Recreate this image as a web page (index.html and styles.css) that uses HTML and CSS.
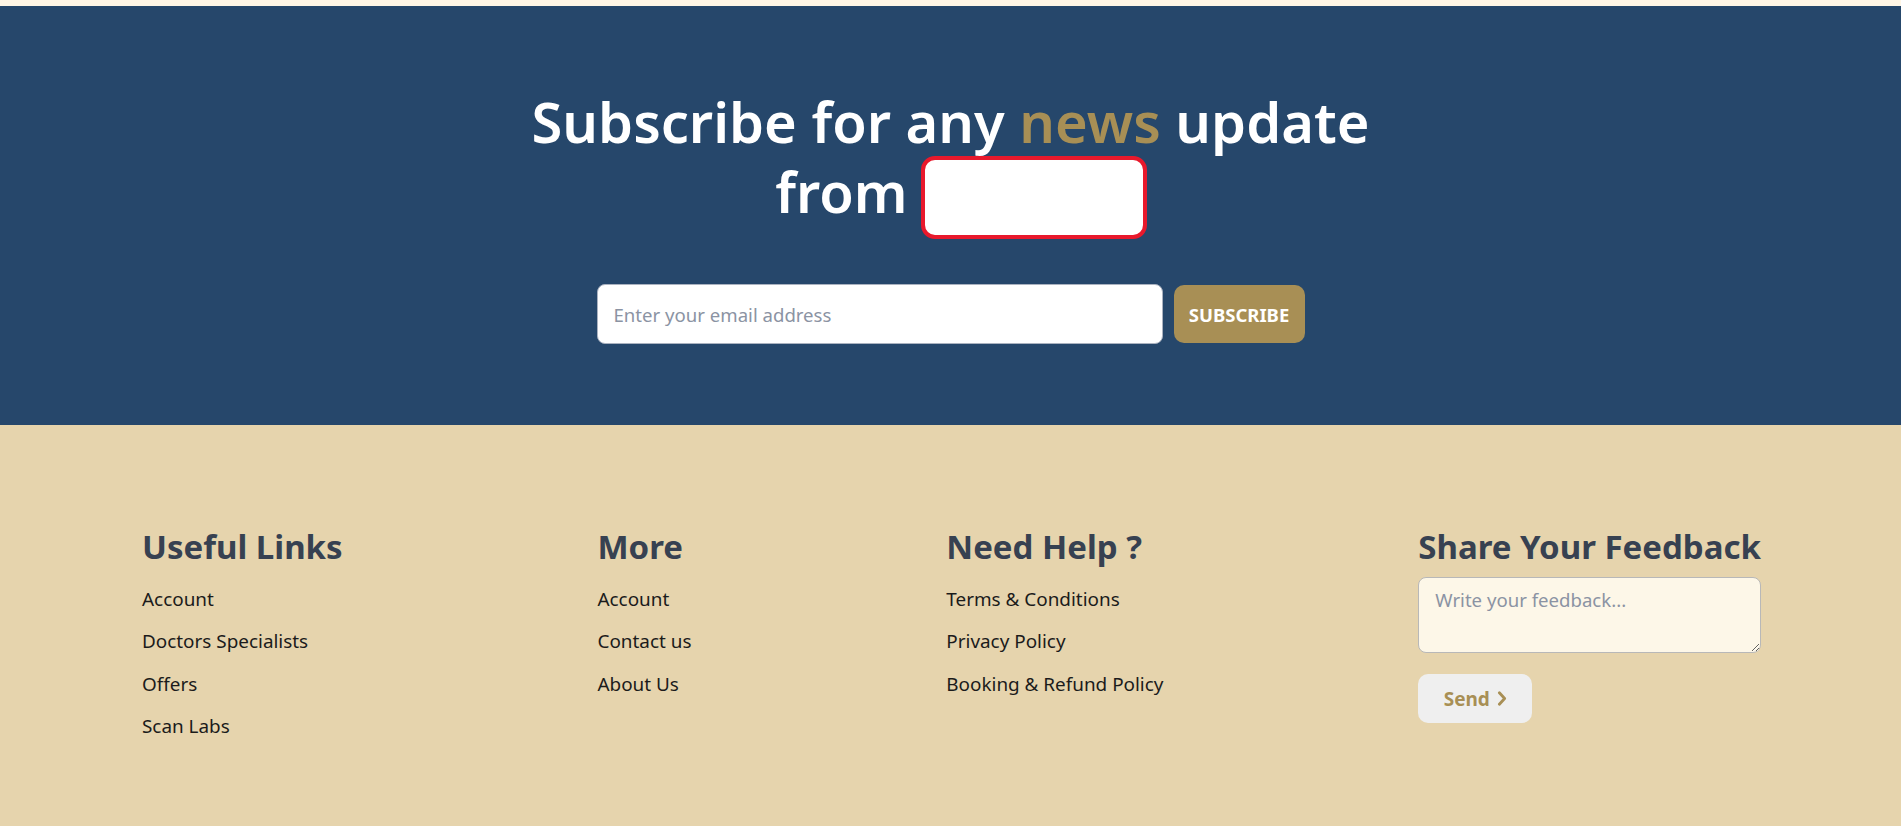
FILE: index.html
```html
<!DOCTYPE html>
<html lang="en">
<head>
<meta charset="utf-8">
<title>Subscribe</title>
<link rel="stylesheet" href="styles.css">
</head>
<body>
<div class="topstrip"></div>
<section class="subscribe">
  <h1 class="title">Subscribe for any <span class="accent">news</span> update<br><span class="from">from</span><span class="logo"></span></h1>
  <form class="subform">
    <input class="email" type="email" placeholder="Enter your email address">
    <button class="subbtn" type="button">SUBSCRIBE</button>
  </form>
</section>
<footer class="footer">
  <div class="cols">
    <div class="col">
      <h2 class="colhead">Useful Links</h2>
      <ul class="links">
        <li>Account</li>
        <li>Doctors Specialists</li>
        <li>Offers</li>
        <li>Scan Labs</li>
      </ul>
    </div>
    <div class="col">
      <h2 class="colhead">More</h2>
      <ul class="links">
        <li>Account</li>
        <li>Contact us</li>
        <li>About Us</li>
      </ul>
    </div>
    <div class="col">
      <h2 class="colhead">Need Help ?</h2>
      <ul class="links">
        <li>Terms &amp; Conditions</li>
        <li>Privacy Policy</li>
        <li>Booking &amp; Refund Policy</li>
      </ul>
    </div>
    <div class="col col-wide">
      <h2 class="colhead">Share Your Feedback</h2>
      <textarea class="feedback" placeholder="Write your feedback..."></textarea>
      <button class="send" type="button">Send <svg class="chev" viewBox="0 0 10 16" width="10" height="15"><path d="M2.2 1.8l5.6 6.2-5.6 6.2" fill="none" stroke="currentColor" stroke-width="3" stroke-linecap="round" stroke-linejoin="round"/></svg></button>
    </div>
  </div>
</footer>
</body>
</html>
```

FILE: styles.css
```css
* { box-sizing: border-box; }
html, body { margin: 0; padding: 0; }
body {
  font-family: "Noto Sans", "Open Sans", sans-serif;
  background: #e6d4ad;
  color: #1b1b1b;
}
.topstrip { height: 6px; background: #fff6e6; }
.subscribe {
  background: #26476b;
  height: 419px;
  display: flex;
  flex-direction: column;
  align-items: center;
  padding-top: 80px;
}
.title {
  margin: 0;
  color: #fff;
  font-size: 56px;
  font-weight: 600;
  line-height: 70px;
  text-align: center;
}
.accent { color: #a88f55; }
.from { margin-left: 21px; }
.logo {
  display: inline-block;
  width: 226px;
  height: 83px;
  margin-left: 13px;
  background: #fff;
  border: 4px solid #e8192c;
  border-radius: 14px;
  vertical-align: -26px;
}
.subform {
  display: flex;
  align-items: center;
  gap: 11px;
  margin-top: 45px;
}
.email {
  width: 566px;
  height: 60px;
  border: 1px solid #aab2c0;
  border-radius: 8px;
  padding: 0 16px;
  font-family: inherit;
  font-size: 18.6px;
  color: #333;
  background: #fff;
}
.email::placeholder { color: #8b93a3; }
.subbtn {
  width: 131px;
  height: 58px;
  border: none;
  border-radius: 10px;
  background: #a88f55;
  color: #fff;
  font-family: inherit;
  font-size: 18.5px;
  font-weight: 700;
}
.footer {
  padding: 100px 140px 60px 142px;
}
.cols {
  display: flex;
  justify-content: space-between;
  align-items: flex-start;
}
.col { display: flex; flex-direction: column; align-items: flex-start; }
.col-wide { align-items: stretch; }
.colhead {
  margin: 0 0 8px;
  font-size: 33px;
  font-weight: 700;
  color: #374151;
  line-height: 44px;
  white-space: nowrap;
}
.links {
  list-style: none;
  margin: 8px 0 0;
  padding: 0;
  display: flex;
  flex-direction: column;
  gap: 14.4px;
}
.links li {
  font-size: 18.9px;
  line-height: 28px;
  white-space: nowrap;
}
.feedback {
  width: 100%;
  height: 76px;
  border: 1px solid #b8b8b8;
  border-radius: 8px;
  background: #fdf7e8;
  padding: 9px 16px;
  font-family: inherit;
  font-size: 18.6px;
  resize: vertical;
}
.feedback::placeholder { color: #8b93a3; }
.send {
  align-self: flex-start;
  margin-top: 21px;
  width: 114px;
  height: 49px;
  border: none;
  border-radius: 10px;
  background: #efefef;
  color: #a88f55;
  font-family: inherit;
  font-size: 19px;
  font-weight: 700;
  display: flex;
  align-items: center;
  justify-content: center;
  gap: 7px;
}
.chev { display: block; }
```
